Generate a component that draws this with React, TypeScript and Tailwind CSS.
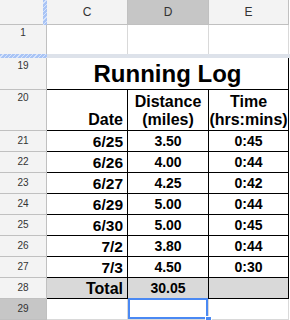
import React from "react";

const hatch =
  "bg-[repeating-linear-gradient(135deg,#a9c4f5_0px,#a9c4f5_2px,#d7e4fb_2px,#d7e4fb_3px)]";

function RowHead({
  n,
  h,
  sel,
  top,
}: {
  n: number;
  h: string;
  sel?: boolean;
  top?: boolean;
}) {
  return (
    <div
      className={`w-[47px] shrink-0 border-r border-b border-[#c0c0c0] flex justify-center text-[10px] leading-[12px] text-[#333] ${h} ${
        sel ? "bg-[#c6c6c6]" : "bg-[#f3f3f3]"
      } ${top ? "pt-[2px]" : "pt-[4px]"}`}
    >
      {n}
    </div>
  );
}

function DataRow({
  n,
  date,
  dist,
  time,
  grey,
}: {
  n: number;
  date: string;
  dist: string;
  time: string;
  grey?: boolean;
}) {
  const bg = grey ? "bg-[#d9d9d9]" : "bg-white";
  return (
    <div className="flex h-[21px]">
      <RowHead n={n} h="h-[21px]" />
      <div
        className={`w-[81px] border-r border-b border-black flex items-end justify-end pr-[4px] font-bold ${
          grey ? "text-[16px]" : "text-[15.5px]"
        } leading-[18px] text-black ${bg}`}
      >
        {date}
      </div>
      <div
        className={`w-[81px] border-r border-b border-black flex items-end justify-center pb-[2px] font-bold text-[14px] leading-[16px] text-black ${bg}`}
      >
        {dist}
      </div>
      <div
        className={`w-[80px] border-r border-b border-black flex items-end justify-center pb-[2px] font-bold text-[14px] leading-[16px] text-black ${bg}`}
      >
        {time}
      </div>
      <div className="flex-1 bg-white" />
    </div>
  );
}

export default function App() {
  const rows = [
    { n: 21, date: "6/25", dist: "3.50", time: "0:45" },
    { n: 22, date: "6/26", dist: "4.00", time: "0:44" },
    { n: 23, date: "6/27", dist: "4.25", time: "0:42" },
    { n: 24, date: "6/29", dist: "5.00", time: "0:44" },
    { n: 25, date: "6/30", dist: "5.00", time: "0:45" },
    { n: 26, date: "7/2", dist: "3.80", time: "0:44" },
    { n: 27, date: "7/3", dist: "4.50", time: "0:30" },
  ];
  return (
    <div className="w-[290px] h-[320px] overflow-hidden bg-white font-['Liberation_Sans',Arial,sans-serif]">
      {/* column header */}
      <div className="flex h-[25px]">
        <div className="w-[43px] bg-[#f3f3f3] border-b border-[#c0c0c0]" />
        <div className={`w-[4px] ${hatch}`} />
        <div className="w-[81px] bg-[#f3f3f3] border-r border-b border-[#c0c0c0] flex items-center justify-center text-[12px] text-[#333]">
          C
        </div>
        <div className="w-[81px] bg-[#c6c6c6] border-r border-b border-[#c0c0c0] flex items-center justify-center text-[12px] text-[#333]">
          D
        </div>
        <div className="w-[80px] bg-[#f3f3f3] border-r border-b border-[#c0c0c0] flex items-center justify-center text-[12px] text-[#333]">
          E
        </div>
        <div className="flex-1 bg-white" />
      </div>

      {/* row 1 */}
      <div className="flex h-[29px]">
        <div className="w-[47px] bg-[#f3f3f3] border-r border-[#c0c0c0] flex justify-center pt-[2px] text-[10px] leading-[12px] text-[#333]">
          1
        </div>
        <div className="w-[81px] border-r border-[#d9d9d9]" />
        <div className="w-[81px] border-r border-[#d9d9d9]" />
        <div className="w-[80px] border-r border-[#d9d9d9]" />
        <div className="flex-1" />
      </div>

      {/* frozen divider */}
      <div className="flex h-[4px]">
        <div className={`w-[47px] ${hatch}`} />
        <div className="flex-1 bg-[#dde2ea]" />
      </div>

      {/* row 19 */}
      <div className="flex h-[32px]">
        <RowHead n={19} h="h-[32px]" top />
        <div className="w-[242px] border-r border-b border-black flex items-center justify-center font-bold text-[24px] leading-[28px] text-black">
          Running Log
        </div>
        <div className="flex-1" />
      </div>

      {/* row 20 */}
      <div className="flex h-[41px]">
        <RowHead n={20} h="h-[41px]" top />
        <div className="w-[81px] border-r border-b border-black flex items-end justify-end pr-[4px] pb-[1px] font-bold text-[16px] leading-[18px] text-black">
          Date
        </div>
        <div className="w-[81px] border-r border-b border-black flex flex-col items-center justify-end pb-[1px] font-bold text-[16px] leading-[18px] text-black">
          <span>Distance</span>
          <span>(miles)</span>
        </div>
        <div className="w-[80px] border-r border-b border-black flex flex-col items-center justify-end pb-[1px] font-bold text-[16px] leading-[18px] text-black">
          <span>Time</span>
          <span>(hrs:mins)</span>
        </div>
        <div className="flex-1" />
      </div>

      {rows.map((r) => (
        <DataRow key={r.n} {...r} />
      ))}
      <DataRow n={28} date="Total" dist="30.05" time="" grey />

      {/* row 29 */}
      <div className="flex h-[21px]">
        <RowHead n={29} h="h-[21px]" sel />
        <div className="w-[81px] border-r border-b border-[#d9d9d9]" />
        <div className="w-[81px] border-r border-b border-[#d9d9d9] relative">
          <div className="absolute top-[-1px] left-0 right-0 bottom-0 border-2 border-[#4a89f3]" />
          <div className="absolute right-[-4px] bottom-[-4px] w-[7px] h-[7px] bg-[#4a89f3] border border-white z-10" />
        </div>
        <div className="w-[80px] border-r border-b border-[#d9d9d9]" />
        <div className="flex-1" />
      </div>
    </div>
  );
}
